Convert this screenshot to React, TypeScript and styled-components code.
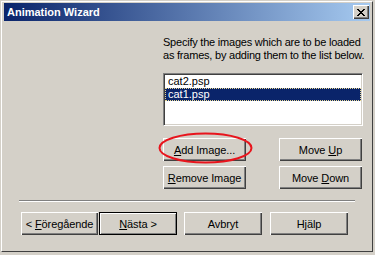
import React from 'react';
import styled, { createGlobalStyle } from 'styled-components';

const GlobalStyle = createGlobalStyle`
    html, body {
        margin: 0;
        padding: 0;
        background: #d4d0c8;
    }
    body {
        font-family: "Liberation Sans", Arial, sans-serif;
        font-size: 11px;
        color: #000;
    }
`;

const Window = styled.div`
    box-sizing: border-box;
    width: 375px;
    height: 255px;
    padding: 1px 2px 3px 1px;
    background: #d4d0c8;
    overflow: hidden;
`;

const Frame = styled.div`
    box-sizing: border-box;
    height: 100%;
    display: flex;
    flex-direction: column;
    padding: 1px 2px 0 2px;
    border-top: 1px solid #fff;
    border-left: 1px solid #fff;
    border-right: 1px solid #404040;
    border-bottom: 1px solid #404040;
`;

const TitleBar = styled.div`
    height: 18px;
    display: flex;
    align-items: center;
    justify-content: space-between;
    padding: 0 1px 0 3px;
    background: linear-gradient(to right, #0a246a, #a6caf0);
`;

const TitleText = styled.span`
    font-weight: bold;
    font-size: 11px;
    line-height: 18px;
    color: #fff;
`;

const CloseButton = styled.div`
    box-sizing: border-box;
    width: 16px;
    height: 14px;
    display: flex;
    align-items: center;
    justify-content: center;
    background: #d4d0c8;
    box-shadow: inset 1px 1px 0 #fff, inset -1px -1px 0 #404040, inset -2px -2px 0 #808080;
`;

const Upper = styled.div`
    padding: 15px 0 0 159px;
`;

const Intro = styled.p`
    margin: 0;
    line-height: 13px;
    letter-spacing: -0.22px;
    white-space: nowrap;
`;

const ListBox = styled.div`
    box-sizing: border-box;
    width: 200px;
    height: 53px;
    margin-top: 11px;
    padding: 1px;
    background: #fff;
    border-top: 1px solid #808080;
    border-left: 1px solid #808080;
    border-right: 1px solid #fff;
    border-bottom: 1px solid #fff;
    box-shadow: inset 1px 1px 0 #404040, inset -1px -1px 0 #d4d0c8;
`;

interface IRow {
    $selected?: boolean;
}

const ListRow = styled.div<IRow>`
    box-sizing: border-box;
    height: 13px;
    line-height: 13px;
    padding-left: 3px;
    white-space: nowrap;
    background: ${(props) => (props.$selected ? '#0a246a' : 'transparent')};
    color: ${(props) => (props.$selected ? '#fff' : '#000')};
    outline: ${(props) => (props.$selected ? '1px dotted #e8d890' : 'none')};
    outline-offset: -1px;
`;

const ButtonGrid = styled.div`
    display: grid;
    grid-template-columns: 83px 83px;
    grid-auto-rows: 23px;
    column-gap: 33px;
    row-gap: 5px;
    margin-top: 12px;
`;

const Marked = styled.div`
    position: relative;
`;

const Ellipse = styled.svg`
    position: absolute;
    left: -5px;
    top: -6px;
    pointer-events: none;
    overflow: visible;
`;

interface IButton {
    $width?: number;
    $gap?: number;
    $default?: boolean;
}

const Button = styled.button<IButton>`
    box-sizing: border-box;
    width: ${(props) => (props.$width ? `${props.$width}px` : '100%')};
    height: 23px;
    margin: 0 0 0 ${(props) => props.$gap || 0}px;
    padding: 0;
    font-family: "Liberation Sans", Arial, sans-serif;
    font-size: 11px;
    letter-spacing: -0.1px;
    color: #000;
    background: #d4d0c8;
    border: ${(props) => (props.$default ? '1px solid #000' : 'none')};
    box-shadow: ${(props) =>
        props.$default
            ? 'inset 1px 1px 0 #fff, inset -1px -1px 0 #808080'
            : 'inset 1px 1px 0 #fff, inset -1px -1px 0 #404040, inset -2px -2px 0 #808080'};
    text-align: center;
`;

const Key = styled.span`
    text-decoration: underline;
`;

const Separator = styled.div`
    width: 336px;
    height: 0;
    margin: 11px 0 0 15px;
    border-top: 1px solid #808080;
    border-bottom: 1px solid #fff;
`;

const Footer = styled.div`
    display: flex;
    margin-top: 10px;
    padding-left: 17px;
`;

const CloseGlyph = () => (
    <svg width="8" height="7" viewBox="0 0 8 7" shapeRendering="crispEdges">
        <path
            d="M0 0h2v1H0zM6 0h2v1H6zM1 1h2v1H1zM5 1h2v1H5zM2 2h4v1H2zM3 3h2v1H3zM2 4h4v1H2zM1 5h2v1H1zM5 5h2v1H5zM0 6h2v1H0zM6 6h2v1H6z"
            fill="#000"
        />
    </svg>
);

const files = [
    { name: 'cat2.psp', selected: false },
    { name: 'cat1.psp', selected: true },
];

const App: React.FC = () => {
    return (
        <>
            <GlobalStyle />
            <Window>
                <Frame>
                    <TitleBar>
                        <TitleText>Animation Wizard</TitleText>
                        <CloseButton>
                            <CloseGlyph />
                        </CloseButton>
                    </TitleBar>
                    <Upper>
                        <Intro>
                            Specify the images which are to be loaded
                            <br />
                            as frames, by adding them to the list below.
                        </Intro>
                        <ListBox>
                            {files.map((file) => (
                                <ListRow key={file.name} $selected={file.selected}>
                                    {file.name}
                                </ListRow>
                            ))}
                        </ListBox>
                        <ButtonGrid>
                            <Marked>
                                <Button>
                                    <Key>A</Key>dd Image...
                                </Button>
                                <Ellipse width="95" height="32">
                                    <ellipse cx="47.5" cy="16" rx="46" ry="14.5" fill="none" stroke="#e8141c" strokeWidth="2" />
                                </Ellipse>
                            </Marked>
                            <Button>
                                Move <Key>U</Key>p
                            </Button>
                            <Button>
                                <Key>R</Key>emove Image
                            </Button>
                            <Button>
                                Move <Key>D</Key>own
                            </Button>
                        </ButtonGrid>
                    </Upper>
                    <Separator />
                    <Footer>
                        <Button $width={77}>
                            &lt; <Key>F</Key>öregående
                        </Button>
                        <Button $width={78} $gap={1} $default>
                            <Key>N</Key>ästa &gt;
                        </Button>
                        <Button $width={78} $gap={7}>
                            Avbryt
                        </Button>
                        <Button $width={78} $gap={8}>
                            Hjälp
                        </Button>
                    </Footer>
                </Frame>
            </Window>
        </>
    );
};

export default App;
